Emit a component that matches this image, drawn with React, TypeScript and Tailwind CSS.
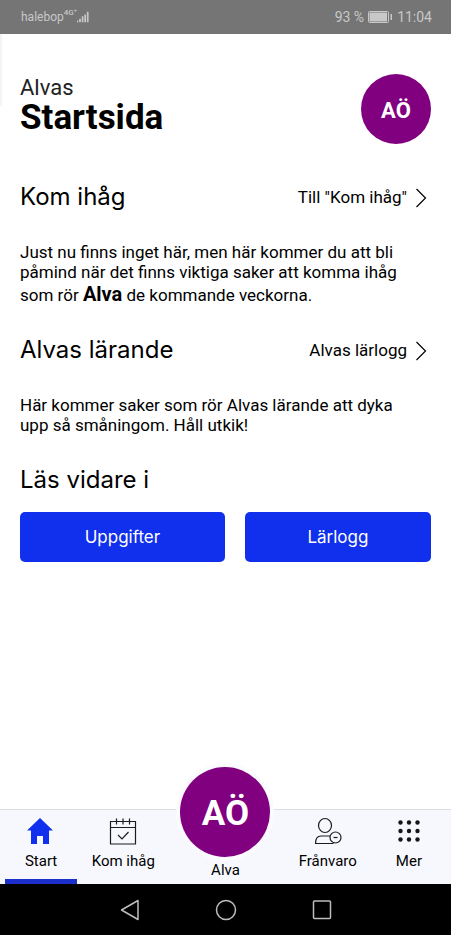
import React from 'react';

export default function App() {
  return (
    <div className="flex min-h-screen flex-col bg-white font-['Roboto',sans-serif] text-black">
      <StatusBar />

      <main className="relative flex-1 px-5 pt-10">
        {/* edge of the closed drawer */}
        <div className="absolute top-0 left-0 h-[72px] w-0.5 bg-[#f4f4f4]" />

        <header className="flex items-center justify-between">
          <h1 className="flex flex-col pb-1.5">
            <span className="text-[22px] leading-6 text-[#222222]">Alvas</span>
            <span className="text-[35px] leading-9 font-bold">Startsida</span>
          </h1>
          <div className="flex size-[70px] items-center justify-center rounded-full bg-[#800080] pt-0.5 text-[22px] font-bold text-white">
            AÖ
          </div>
        </header>

        <section className="mt-[37px]">
          <SectionHeader title="Kom ihåg" link={'Till "Kom ihåg"'} />
          <p className="mt-[29px] pr-2 text-[17px] leading-5">
            Just nu finns inget här, men här kommer du att bli påmind när det finns viktiga saker att komma ihåg som rör{' '}
            <strong className="text-[20px] leading-6 font-bold">Alva</strong> de kommande veckorna.
          </p>
        </section>

        <section className="mt-7">
          <SectionHeader title="Alvas lärande" link="Alvas lärlogg" />
          <p className="mt-[29px] pr-2 text-[17px] leading-5">
            Här kommer saker som rör Alvas lärande att dyka upp så småningom. Håll utkik!
          </p>
        </section>

        <section className="mt-[29px]">
          <h2 className="font-['Inter',sans-serif] text-2xl leading-8">Läs vidare i</h2>
          <div className="mt-4 grid grid-cols-[11fr_10fr] gap-5 font-['Inter',sans-serif] text-[17px] text-white">
            <button type="button" className="h-[50px] rounded-[5px] bg-[#1030ee] pt-0.5">Uppgifter</button>
            <button type="button" className="h-[50px] rounded-[5px] bg-[#1030ee] pt-0.5">Lärlogg</button>
          </div>
        </section>
      </main>

      <TabBar />
      <SystemBar />
    </div>
  );
}

function StatusBar() {
  return (
    <div className="flex h-[34px] items-center justify-between bg-[#757575] pr-[19px] pl-[21px] text-[#c8c8c8]">
      <div className="flex items-center">
        <span className="text-xs">halebop</span>
        <span className="mb-2 text-[8px] leading-[10px] font-medium">4G⁺</span>
        <svg width="12" height="14" viewBox="0 0 14 14" fill="currentColor" aria-hidden="true">
          <path d="M0 11h1.500v2H0zM2.500 9h2v4h-2zM5.500 6h2v7h-2zM8.500 4h2v9h-2zM11.500 1h2v12h-2z" />
        </svg>
      </div>
      <div className="flex items-center gap-1 text-sm">
        <span>93 %</span>
        <svg width="25" height="12" viewBox="0 0 25 12" fill="none" aria-hidden="true">
          <rect x=".5" y=".5" width="20" height="11" rx="1" stroke="currentColor" />
          <path d="M1.500 1.500h17.500v9H1.500z" fill="currentColor" />
          <path d="M22.500 3H24v6h-1.500z" fill="currentColor" />
        </svg>
        <span>11:04</span>
      </div>
    </div>
  );
}

function SectionHeader({ title, link }: { title: string, link: string }) {
  return (
    <div className="flex items-center justify-between">
      <h2 className="font-['Inter',sans-serif] text-2xl leading-8">{title}</h2>
      <a href="#" className="flex items-center gap-2 pt-0.5 pr-1 text-[17px]">
        {link}
        <svg width="12" height="20" viewBox="0 0 12 20" fill="none" stroke="currentColor" strokeWidth="1.2" aria-hidden="true">
          <path d="M1.500 1l9 9-9 9" />
        </svg>
      </a>
    </div>
  );
}

function TabBar() {
  const tab = "flex flex-col items-center pt-[7px] text-[15px] leading-5";

  return (
    <nav className="grid h-[75px] grid-cols-[72fr_92fr_112fr_92fr_70fr] border-t border-[#dcdce2] bg-[#f7f8fd] pr-[7px] pl-[5px]">
      <a href="#" className={`${tab} border-b-[5px] border-[#1a2fcc]`}>
        <svg width="28" height="28" viewBox="0 0 28 28" fill="#1030ee" aria-hidden="true">
          <path d="M13 1l13 12.500h-4V27h-6v-8h-6v8H4V13.500H0z" />
        </svg>
        <span className="mt-1.5">Start</span>
      </a>
      <a href="#" className={tab}>
        <svg width="28" height="28" viewBox="0 0 28 28" fill="none" stroke="#1c1c1c" strokeWidth="1.2" aria-hidden="true">
          <path d="M1.500 4.500h25v22.500h-25zM1.500 10.500h25M7.500 1.500v6M14 1.500v6M20.500 1.500v6M9 18l4 4 6.500-7" />
        </svg>
        <span className="mt-1.5">Kom ihåg</span>
      </a>
      <a href="#" className="relative flex flex-col items-center pt-[50px] text-[15px] leading-5">
        <span className="absolute bottom-[27px] flex size-[90px] items-center justify-center rounded-full bg-[#800080] pt-1 text-[35px] font-bold text-white ring-4 ring-[#fafaff]">
          AÖ
        </span>
        <span className="relative">Alva</span>
      </a>
      <a href="#" className={tab}>
        <svg width="28" height="28" viewBox="0 0 28 28" fill="none" stroke="#1c1c1c" strokeWidth="1.2" aria-hidden="true">
          <ellipse cx="11" cy="8.500" rx="6.500" ry="7" />
          <path d="M16 19H7c-3.500 0-5.500 2-5.500 7.500h18" />
          <circle cx="21.500" cy="20.500" r="5.500" />
          <path d="M19.500 20.500h4" />
        </svg>
        <span className="mt-1.5">Frånvaro</span>
      </a>
      <a href="#" className={tab}>
        <svg width="28" height="28" viewBox="0 0 28 28" fill="#151515" aria-hidden="true">
          {[5.5, 14, 22.5].map((y) =>
            [5.5, 14, 22.5].map((x) => <circle key={`${x}-${y}`} cx={x} cy={y} r="2.2" />)
          )}
        </svg>
        <span className="mt-1.5">Mer</span>
      </a>
    </nav>
  );
}

function SystemBar() {
  return (
    <div className="flex h-[51px] items-center justify-center gap-[74px] bg-black text-[#bdbdbd]">
      <button type="button" aria-label="Back">
        <svg width="22" height="22" viewBox="0 0 22 22" fill="none" stroke="currentColor" strokeWidth="1.5" strokeLinejoin="round" aria-hidden="true">
          <path d="M19 1.500v19L2.500 11z" />
        </svg>
      </button>
      <button type="button" aria-label="Home">
        <svg width="22" height="22" viewBox="0 0 22 22" fill="none" stroke="currentColor" strokeWidth="1.5" aria-hidden="true">
          <circle cx="11" cy="11" r="9.5" />
        </svg>
      </button>
      <button type="button" aria-label="Recent apps">
        <svg width="22" height="22" viewBox="0 0 22 22" fill="none" stroke="currentColor" strokeWidth="1.5" aria-hidden="true">
          <rect x="2.500" y="2" width="17" height="17.500" rx="1" />
        </svg>
      </button>
    </div>
  );
}
